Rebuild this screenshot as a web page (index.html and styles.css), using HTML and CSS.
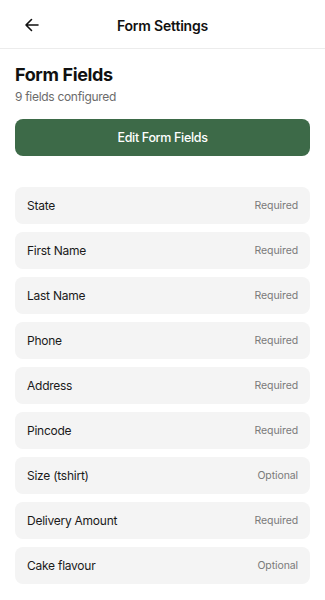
FILE: index.html
```html
<!DOCTYPE html>
<html lang="en">
<head>
    <meta charset="UTF-8">
    <meta name="viewport" content="width=device-width, initial-scale=1.0">
    <title>Form Settings</title>
    <link rel="stylesheet" href="styles.css">
</head>
<body>
    <header class="header">
        <button class="back-btn" aria-label="Back">
            <svg width="16" height="16" viewBox="0 0 16 16" fill="none" stroke="#111" stroke-width="1.6" stroke-linecap="round" stroke-linejoin="round">
                <path d="M14 8H2M7.5 2.5L2 8l5.5 5.5"/>
            </svg>
        </button>
        <h1 class="header-title">Form Settings</h1>
    </header>

    <main class="content">
        <h2 class="section-title">Form Fields</h2>
        <p class="section-sub">9 fields configured</p>

        <button class="edit-button">Edit Form Fields</button>

        <ul class="field-list">
            <li class="field"><span>State</span><span class="field-tag">Required</span></li>
            <li class="field"><span>First Name</span><span class="field-tag">Required</span></li>
            <li class="field"><span>Last Name</span><span class="field-tag">Required</span></li>
            <li class="field"><span>Phone</span><span class="field-tag">Required</span></li>
            <li class="field"><span>Address</span><span class="field-tag">Required</span></li>
            <li class="field"><span>Pincode</span><span class="field-tag">Required</span></li>
            <li class="field"><span>Size (tshirt)</span><span class="field-tag">Optional</span></li>
            <li class="field"><span>Delivery Amount</span><span class="field-tag">Required</span></li>
            <li class="field"><span>Cake flavour</span><span class="field-tag">Optional</span></li>
        </ul>
    </main>
</body>
</html>
```

FILE: styles.css
```css
* {
    margin: 0;
    padding: 0;
    box-sizing: border-box;
    font-family: Inter, 'Noto Sans', sans-serif;
}

body {
    background: #fff;
    color: #111;
}

.header {
    position: relative;
    height: 49px;
    display: flex;
    align-items: center;
    justify-content: center;
    border-bottom: 1px solid #ececec;
}

.back-btn {
    position: absolute;
    left: 24px;
    top: 17px;
    background: none;
    border: none;
    display: flex;
}

.header-title {
    font-size: 14px;
    font-weight: 600;
    letter-spacing: -0.2px;
    margin-top: 2px;
}

.content {
    padding: 14px 15px 20px;
}

.section-title {
    font-size: 18px;
    font-weight: 700;
    letter-spacing: -0.36px;
    line-height: 24px;
}

.section-sub {
    font-size: 12px;
    color: #6b6b6b;
    letter-spacing: -0.3px;
    line-height: 18px;
    margin-top: 1px;
}

.edit-button {
    display: block;
    width: 100%;
    height: 37px;
    margin-top: 13px;
    background: #3d6a48;
    color: #fff;
    border: none;
    border-radius: 8px;
    font-size: 12.5px;
    font-weight: 500;
    letter-spacing: -0.33px;
}

.field-list {
    list-style: none;
    margin-top: 31px;
    display: flex;
    flex-direction: column;
    gap: 8px;
}

.field {
    height: 37px;
    background: #f4f4f4;
    border-radius: 8px;
    display: flex;
    align-items: center;
    justify-content: space-between;
    padding: 0 12px;
    font-size: 12px;
    letter-spacing: -0.25px;
    color: #1a1a1a;
}

.field-tag {
    font-size: 10.5px;
    letter-spacing: -0.1px;
    color: #7a7a7a;
}
```
